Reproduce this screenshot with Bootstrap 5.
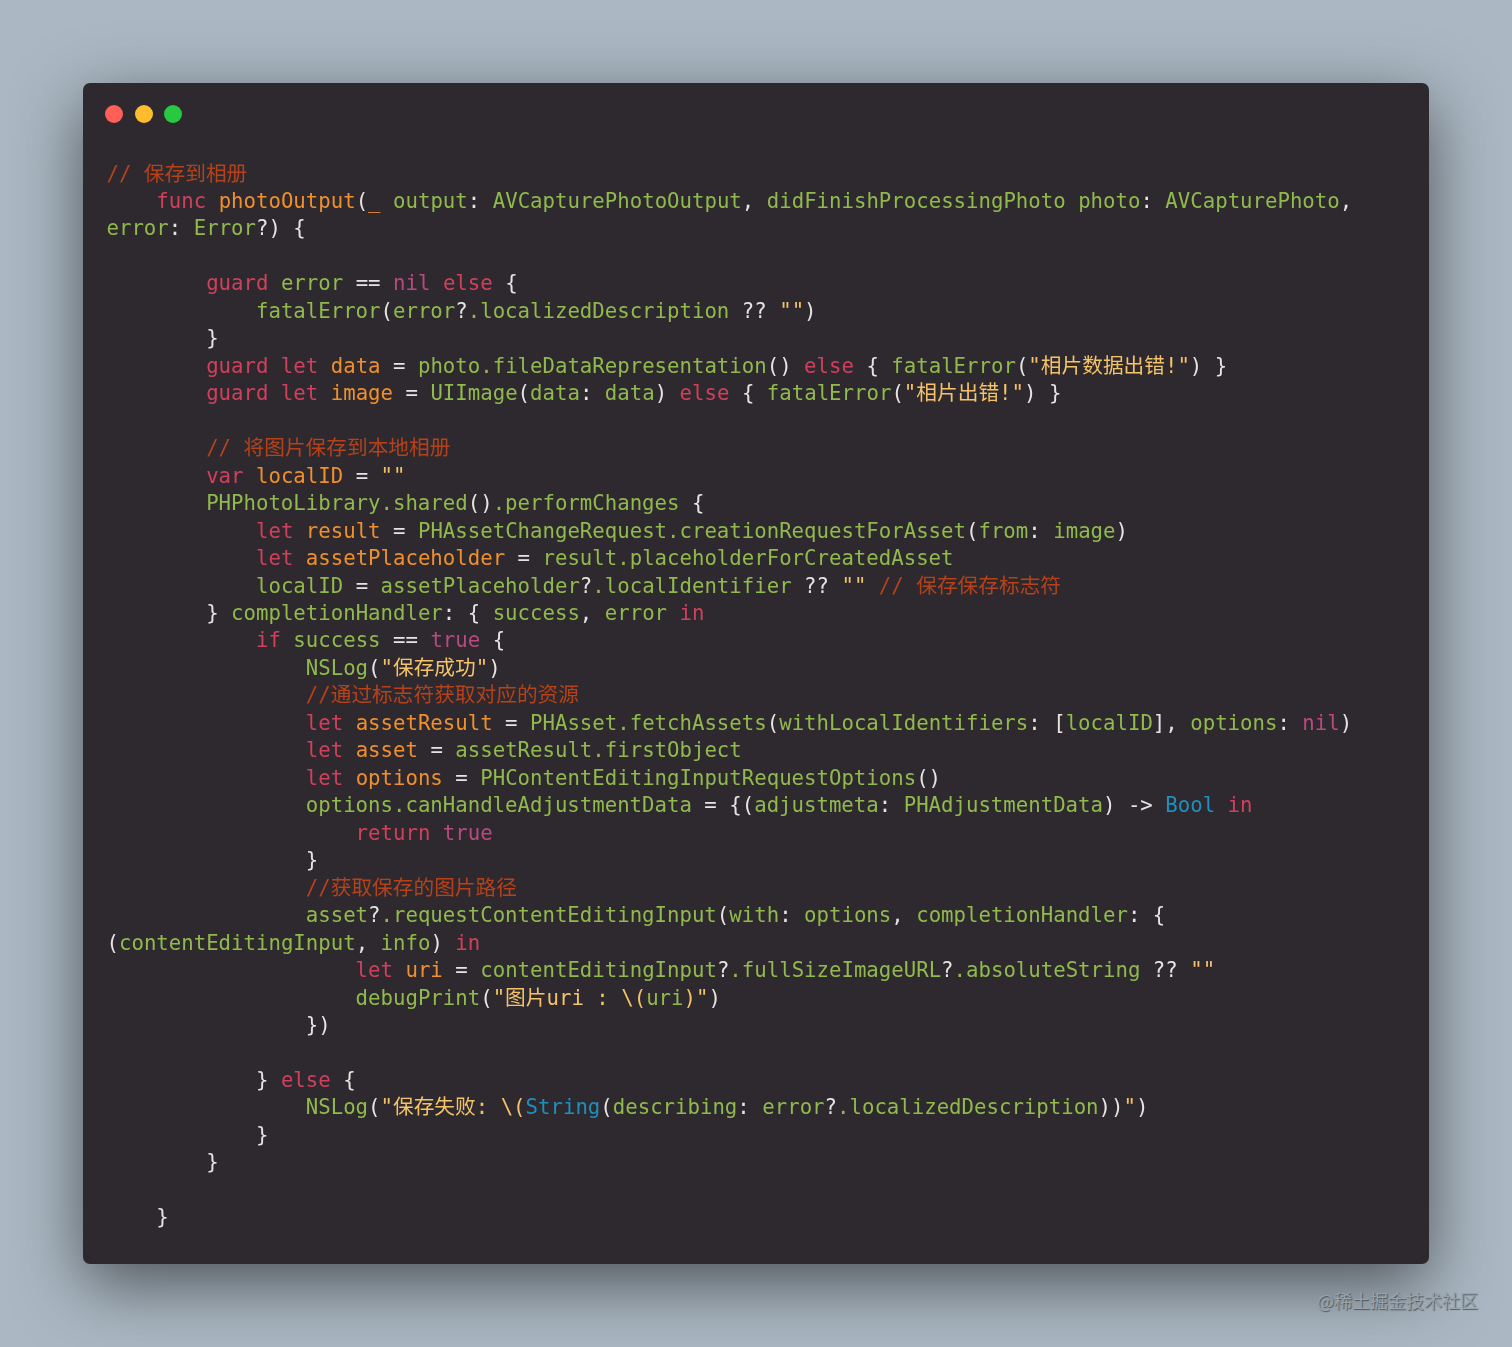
<!DOCTYPE html>
<html lang="zh">
<head>
<meta charset="utf-8">
<title>Code snapshot</title>
<link href="https://cdn.jsdelivr.net/npm/bootstrap@5.3.0/dist/css/bootstrap.min.css" rel="stylesheet">
<style>
html,body{height:1347px;overflow:hidden}
body{background:#abb8c3}
.stage{height:1347px;padding:83px 83px 0}
.codewin{background:#2e292f;border-radius:7px;height:1181px;padding:22px 22px 0;box-shadow:0 20px 68px rgba(0,0,0,.55)}
.dots{height:18px}
.dot{width:18px;height:18px;border-radius:50%}
.dot-r{background:#ff5f56}.dot-y{background:#ffbd2e}.dot-g{background:#27c93f}
.gap-dots{gap:11.5px}
.codetext{padding-top:37.5px;padding-left:1.5px;font-family:"DejaVu Sans Mono","Noto Sans CJK SC",monospace;font-size:20.69px;filter:blur(.35px)}
.ln{height:27.475px;line-height:27.475px;white-space:pre}
.w{color:#e6e4e2}.k{color:#d0405c}.p{color:#b84a80}.v{color:#f0902c}.g{color:#90ba4c}.c{color:#b5421a}.s{color:#f4c268}.t{color:#1f8fbd}
.mark-juejin{position:absolute;right:34px;top:1288px;font-family:"Noto Sans CJK SC",sans-serif;font-size:18px;line-height:24px;color:#98a3ad;text-shadow:1px 1px 1px rgba(50,55,60,.7)}
</style>
</head>
<body>
<div class="stage position-relative">
<div class="codewin">
<div class="dots d-flex gap-dots"><span class="dot dot-r"></span><span class="dot dot-y"></span><span class="dot dot-g"></span></div>
<div class="codetext">
<div class="ln"><span class="c">// 保存到相册</span></div>
<div class="ln">    <span class="k">func</span> <span class="v">photoOutput</span><span class="w">(</span><span class="v">_</span> <span class="g">output</span><span class="w">:</span> <span class="g">AVCapturePhotoOutput</span><span class="w">,</span> <span class="g">didFinishProcessingPhoto photo</span><span class="w">:</span> <span class="g">AVCapturePhoto</span><span class="w">,</span></div>
<div class="ln"><span class="g">error</span><span class="w">:</span> <span class="g">Error</span><span class="w">?) {</span></div>
<div class="ln"> </div>
<div class="ln">        <span class="k">guard</span> <span class="g">error</span> <span class="w">==</span> <span class="p">nil</span> <span class="k">else</span> <span class="w">{</span></div>
<div class="ln">            <span class="g">fatalError</span><span class="w">(</span><span class="g">error</span><span class="w">?</span><span class="g">.localizedDescription</span> <span class="w">??</span> <span class="s">""</span><span class="w">)</span></div>
<div class="ln">        <span class="w">}</span></div>
<div class="ln">        <span class="k">guard let</span> <span class="v">data</span> <span class="w">=</span> <span class="g">photo.fileDataRepresentation</span><span class="w">()</span> <span class="k">else</span> <span class="w">{</span> <span class="g">fatalError</span><span class="w">(</span><span class="s">"相片数据出错!"</span><span class="w">) }</span></div>
<div class="ln">        <span class="k">guard let</span> <span class="v">image</span> <span class="w">=</span> <span class="g">UIImage</span><span class="w">(</span><span class="g">data</span><span class="w">:</span> <span class="g">data</span><span class="w">)</span> <span class="k">else</span> <span class="w">{</span> <span class="g">fatalError</span><span class="w">(</span><span class="s">"相片出错!"</span><span class="w">) }</span></div>
<div class="ln"> </div>
<div class="ln">        <span class="c">// 将图片保存到本地相册</span></div>
<div class="ln">        <span class="k">var</span> <span class="v">localID</span> <span class="w">=</span> <span class="s">""</span></div>
<div class="ln">        <span class="g">PHPhotoLibrary.shared</span><span class="w">()</span><span class="g">.performChanges</span> <span class="w">{</span></div>
<div class="ln">            <span class="k">let</span> <span class="v">result</span> <span class="w">=</span> <span class="g">PHAssetChangeRequest.creationRequestForAsset</span><span class="w">(</span><span class="g">from</span><span class="w">:</span> <span class="g">image</span><span class="w">)</span></div>
<div class="ln">            <span class="k">let</span> <span class="v">assetPlaceholder</span> <span class="w">=</span> <span class="g">result.placeholderForCreatedAsset</span></div>
<div class="ln">            <span class="g">localID</span> <span class="w">=</span> <span class="g">assetPlaceholder</span><span class="w">?</span><span class="g">.localIdentifier</span> <span class="w">??</span> <span class="s">""</span> <span class="c">// 保存保存标志符</span></div>
<div class="ln">        <span class="w">}</span> <span class="g">completionHandler</span><span class="w">: {</span> <span class="g">success</span><span class="w">,</span> <span class="g">error</span> <span class="k">in</span></div>
<div class="ln">            <span class="k">if</span> <span class="g">success</span> <span class="w">==</span> <span class="p">true</span> <span class="w">{</span></div>
<div class="ln">                <span class="g">NSLog</span><span class="w">(</span><span class="s">"保存成功"</span><span class="w">)</span></div>
<div class="ln">                <span class="c">//通过标志符获取对应的资源</span></div>
<div class="ln">                <span class="k">let</span> <span class="v">assetResult</span> <span class="w">=</span> <span class="g">PHAsset.fetchAssets</span><span class="w">(</span><span class="g">withLocalIdentifiers</span><span class="w">: [</span><span class="g">localID</span><span class="w">],</span> <span class="g">options</span><span class="w">:</span> <span class="p">nil</span><span class="w">)</span></div>
<div class="ln">                <span class="k">let</span> <span class="v">asset</span> <span class="w">=</span> <span class="g">assetResult.firstObject</span></div>
<div class="ln">                <span class="k">let</span> <span class="v">options</span> <span class="w">=</span> <span class="g">PHContentEditingInputRequestOptions</span><span class="w">()</span></div>
<div class="ln">                <span class="g">options.canHandleAdjustmentData</span> <span class="w">= {(</span><span class="g">adjustmeta</span><span class="w">:</span> <span class="g">PHAdjustmentData</span><span class="w">) -&gt;</span> <span class="t">Bool</span> <span class="k">in</span></div>
<div class="ln">                    <span class="k">return</span> <span class="p">true</span></div>
<div class="ln">                <span class="w">}</span></div>
<div class="ln">                <span class="c">//获取保存的图片路径</span></div>
<div class="ln">                <span class="g">asset</span><span class="w">?</span><span class="g">.requestContentEditingInput</span><span class="w">(</span><span class="g">with</span><span class="w">:</span> <span class="g">options</span><span class="w">,</span> <span class="g">completionHandler</span><span class="w">: {</span></div>
<div class="ln"><span class="w">(</span><span class="g">contentEditingInput</span><span class="w">,</span> <span class="g">info</span><span class="w">)</span> <span class="k">in</span></div>
<div class="ln">                    <span class="k">let</span> <span class="v">uri</span> <span class="w">=</span> <span class="g">contentEditingInput</span><span class="w">?</span><span class="g">.fullSizeImageURL</span><span class="w">?</span><span class="g">.absoluteString</span> <span class="w">??</span> <span class="s">""</span></div>
<div class="ln">                    <span class="g">debugPrint</span><span class="w">(</span><span class="s">"图片uri : \(</span><span class="g">uri</span><span class="s">)"</span><span class="w">)</span></div>
<div class="ln">                <span class="w">})</span></div>
<div class="ln"> </div>
<div class="ln">            <span class="w">}</span> <span class="k">else</span> <span class="w">{</span></div>
<div class="ln">                <span class="g">NSLog</span><span class="w">(</span><span class="s">"保存失败: \(</span><span class="t">String</span><span class="w">(</span><span class="g">describing</span><span class="w">:</span> <span class="g">error</span><span class="w">?</span><span class="g">.localizedDescription</span><span class="w">))</span><span class="s">"</span><span class="w">)</span></div>
<div class="ln">            <span class="w">}</span></div>
<div class="ln">        <span class="w">}</span></div>
<div class="ln"> </div>
<div class="ln">    <span class="w">}</span></div>
</div>
</div>
<div class="mark-juejin">@稀土掘金技术社区</div>
</div>
<script src="https://cdn.jsdelivr.net/npm/bootstrap@5.3.0/dist/js/bootstrap.bundle.min.js"></script>
</body>
</html>
